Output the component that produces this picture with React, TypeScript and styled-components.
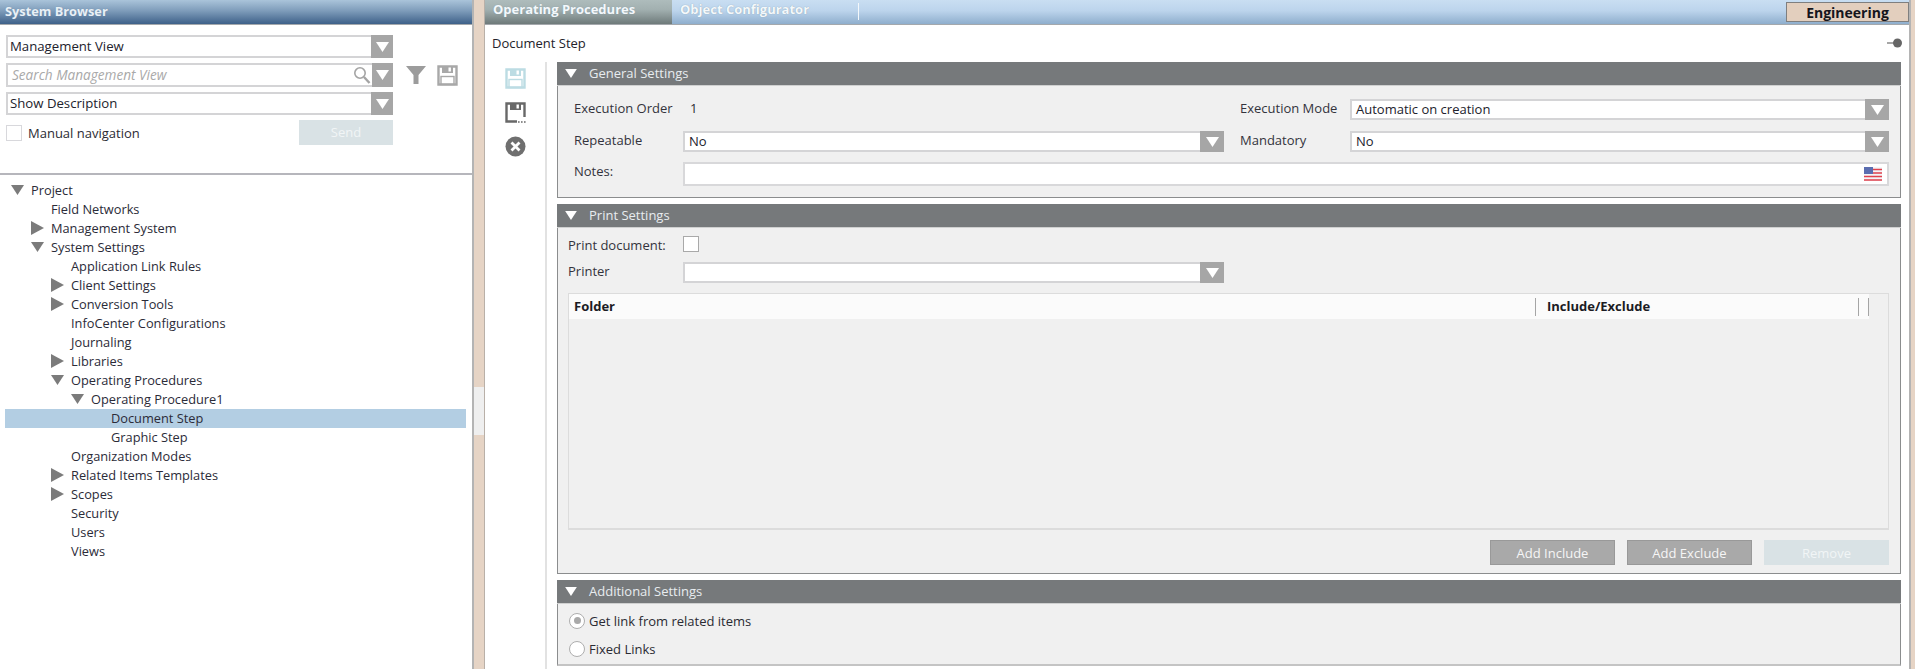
import React from "react";
import styled, { createGlobalStyle } from "styled-components";

const Global = createGlobalStyle`
  html, body { margin: 0; padding: 0; background: #e6d4c5; }
  * { box-sizing: border-box; }
  body { font-family: "Open Sans", "Noto Sans", "Liberation Sans", sans-serif; font-size: 13px; color: #2b2b33; }
`;

const Page = styled.div`
  width: 1915px; height: 669px; display: flex; overflow: hidden; background: #e6d4c5;
`;
const LeftPanel = styled.aside`
  width: 474px; height: 669px; flex: none; background: #fff; border-right: 2px solid #b4b4b4;
  display: flex; flex-direction: column;
`;
const PanelTitle = styled.header`
  height: 25px; flex: none; padding: 2px 0 0 5px; font-weight: 700; font-size: 12.8px; color: #e9f0f6;
  background: linear-gradient(#aac4da, #7e9cba 45%, #3e6189);
  border-bottom: 1px solid #a4a8ac; text-shadow: 0 0 1px #6d8cab;
`;
const Controls = styled.div`
  height: 150px; flex: none; padding: 10px 0 0 6px; display: grid;
  grid-template-columns: 387px auto; grid-template-rows: 23px 24px 23px 24px;
  row-gap: 5px; column-gap: 14px; border-bottom: 2px solid #b6b6bc;
`;
const ToolIcons = styled.div`
  display: flex; gap: 11px; align-items: center; grid-column: 2; grid-row: 2; margin-left: -1px;
`;
const SelectBox = styled.div<{ $h?: number }>`
  height: ${(p) => p.$h ?? 23}px; display: flex; align-items: stretch; background: #fff;
  border: 2px solid #d4d4d6; border-right: none;
  font-size: 13px; color: #22222c; min-width: 0;
`;
const SelectText = styled.div<{ $placeholder?: boolean; $tight?: boolean }>`
  flex: 1; display: flex; align-items: center; padding: 0 0 2px ${(p) => (p.$tight ? 2 : 4)}px; min-width: 0;
  white-space: nowrap;
  ${(p) => p.$tight && "font-size: 13.2px;"}
  ${(p) => p.$placeholder && "font-style: italic; color: #a9a9a9; font-size: 13.6px;"}
`;
const SelectArrow = styled.div<{ $w?: number }>`
  width: ${(p) => p.$w ?? 22}px; flex: none; margin: -2px 0; background: #a6a6a6;
  display: flex; align-items: center; justify-content: center;
`;
const ManualRow = styled.div`
  display: flex; align-items: center; justify-content: space-between; height: 24px;
`;
const CheckLabel = styled.label`
  display: flex; align-items: center; gap: 6px; font-size: 13px; margin-top: 2px;
`;
const CheckBox = styled.span<{ $strong?: boolean }>`
  display: block; width: 16px; height: 16px; background: #fff; flex: none;
  border: 1px solid ${(p) => (p.$strong ? "#a9a9a9" : "#d8d8dc")};
`;
const FlatButton = styled.button<{ $disabled?: boolean; $w: number }>`
  width: ${(p) => p.$w}px; height: 25px; border: 1px solid ${(p) => (p.$disabled ? "#d9e2e5" : "#999")};
  background: ${(p) => (p.$disabled ? "#d9e2e5" : "#a9a9a9")};
  color: ${(p) => (p.$disabled ? "#f1f5f6" : "#f6f6f6")}; font: inherit; font-size: 13px; padding: 0;
`;
const Tree = styled.div`
  padding-top: 5px; flex: 1; position: relative;
`;
const TreeRow = styled.div<{ $depth: number; $selected?: boolean }>`
  height: 19.05px; margin: 0 6px 0 5px; padding-left: ${(p) => p.$depth * 20 + 6}px;
  display: flex; align-items: center; font-size: 12.8px; color: #2b2b38;
  background: ${(p) => (p.$selected ? "#b3cee3" : "transparent")};
`;
const TreeToggle = styled.span`
  width: 20px; flex: none; display: flex; align-items: center;
`;

const Splitter = styled.div`
  width: 11px; flex: none; position: relative; background: #e6d4c5; border-right: 1px solid #b9b0a8;
`;
const Grip = styled.div`
  position: absolute; left: 0; right: 0; top: 387px; height: 48px; background: #efefef;
`;

const MainPanel = styled.main`
  width: 1426px; flex: none; height: 669px; background: #fff; display: flex; flex-direction: column;
  border-right: 2px solid #b4b4b4;
`;
const TabBar = styled.nav`
  height: 25px; flex: none; display: flex; align-items: flex-start;
  background: linear-gradient(#c9def2, #bcd4ec 45%, #8eaecd);
  border-bottom: 1px solid #a4a8ac; font-weight: 700; font-size: 13px;
`;
const Tab = styled.div<{ $active?: boolean; $w: number }>`
  width: ${(p) => p.$w}px; height: 24px; padding: 0 0 0 8px; color: #f4f8fb;
  background: ${(p) => (p.$active ? "linear-gradient(#aebcbc, #a2b0b0 40%, #6e7a7a)" : "transparent")};
  text-shadow: 0 0 1px #7f98a8;
`;
const TabSep = styled.span`
  width: 1px; height: 17px; margin-top: 3px; background: #f4f8fb;
`;
const RoleButton = styled.div`
  margin: 2px 0 0 auto; width: 123px; height: 20px; background: #e3cfbe; border: 1px solid #7f7f7f;
  color: #15151c; font-weight: 700; font-size: 14px; display: flex; align-items: center; justify-content: center;
`;
const TitleRow = styled.div`
  height: 37px; flex: none; padding: 0 6px 2px 7px; display: flex; align-items: center; justify-content: space-between;
  font-size: 13px; color: #23232b;
`;
const Workspace = styled.div`
  flex: 1; display: flex; min-height: 0;
`;
const Toolbar = styled.div`
  width: 62px; flex: none; padding-top: 6px; display: flex; flex-direction: column; align-items: center; gap: 13px;
  border-right: 2px solid #e2e2e2;
`;
const Sections = styled.div`
  flex: 1; padding: 0 8px 0 10px; display: flex; flex-direction: column; gap: 6px;
`;
const Section = styled.section<{ $soft?: boolean }>`
  border: 1px solid #8b8d8e; border-top: none; background: #f0f0f0; flex: none;
  ${(p) => p.$soft && "border-bottom: 2px solid #c4c4c4;"}
`;
const SectionHead = styled.h3`
  margin: 0 -1px; height: 24px; background: #76797b; color: #e8ecef; font-weight: 400; font-size: 13px;
  display: flex; align-items: center; padding: 0 0 1px 8px; gap: 12px; border-bottom: 1px solid #cfd0d0;
`;
const GeneralBody = styled.div`
  height: 111px; padding: 13px 11px 0 16px; display: grid;
  grid-template-columns: 109px 541px 16px 110px 1fr; grid-template-rows: 22px 21px 24px; row-gap: 10px;
`;
const FieldLabel = styled.div`
  font-size: 13px; color: #33333c; height: 18px; line-height: 18px;
`;
const Value = styled.div`
  font-size: 13px; height: 18px; line-height: 18px; padding-left: 7px;
`;
const Gap = styled.div``;
const NotesField = styled.div`
  grid-column: 2 / span 4; display: flex; align-items: center; justify-content: flex-end; padding-right: 5px;
  background: #fff; border: 2px solid #d8d8da;
`;
const PrintBody = styled.div`
  height: 345px; padding: 8px 11px 0 10px; display: flex; flex-direction: column;
`;
const PrintRow = styled.div<{ $h: number; $mb: number }>`
  height: ${(p) => p.$h}px; margin-bottom: ${(p) => p.$mb}px; display: flex; flex: none;
`;
const PrintLabel = styled(FieldLabel)`
  width: 115px; flex: none;
`;
const PrintSelect = styled(SelectBox)`
  width: 541px;
`;
const DataTable = styled.div`
  height: 237px; flex: none; border: 1px solid #dcdcdc; border-bottom-width: 2px;
`;
const TableHead = styled.div`
  height: 25px; width: 1300px; background: #fbfbfb; display: flex; align-items: center;
  font-weight: 700; font-size: 13px; color: #1c1c24;
`;
const HeadCell = styled.div<{ $w: number }>`
  width: ${(p) => p.$w}px; flex: none; height: 18px; line-height: 17px; padding-left: 5px;
  border-right: 1px solid #a5a5a5;
`;
const HeadCellNext = styled(HeadCell)`
  padding-left: 11px;
`;
const ButtonRow = styled.div`
  margin-top: 10px; display: flex; justify-content: flex-end; gap: 12px;
`;
const AdditionalBody = styled.div`
  height: 60px; padding: 6px 0 0 11px; display: flex; flex-direction: column; gap: 7px;
`;
const RadioRow = styled.label`
  height: 21px; display: flex; align-items: center; gap: 4px; font-size: 13px; color: #2b2b33;
`;
const Radio = styled.span<{ $on?: boolean }>`
  width: 16px; height: 16px; border-radius: 50%; border: 1px solid #aeaeae; background: #fff;
  display: flex; align-items: center; justify-content: center; flex: none;
  &::after { content: ""; width: 7px; height: 7px; border-radius: 50%; background: ${(p) => (p.$on ? "#a9a9a9" : "transparent")}; }
`;

const Down = ({ c = "#fff", w = 13, h = 10 }: { c?: string; w?: number; h?: number }) => (
  <svg width={w} height={h} viewBox="0 0 13 10"><path d="M0 0H13L6.5 10Z" fill={c} /></svg>
);
const Right = () => (
  <svg width="13" height="14" viewBox="0 0 13 14"><path d="M0 0L13 7L0 14Z" fill="#7b7b7b" /></svg>
);
const SaveIcon = ({ c, dots }: { c: string; dots?: boolean }) => (
  <svg width="21" height="21" viewBox="0 0 21 21">
    <path d={dots ? "M12 19.5H1.5V1.5H19.5V15" : "M1.5 1.5H19.5V19.5H1.5Z"} fill="none" stroke={c} strokeWidth="2.4" />
    <rect x="5" y="1" width="11" height="7" fill={c} />
    <rect x="11.5" y="2.5" width="2.4" height="4" fill="#fff" />
    {!dots && <rect x="4" y="11.5" width="13" height="8" fill="none" stroke={c} strokeWidth="1.4" />}
    {dots && <path d="M13 20h1.6M16 20h1.6M19 20h1.6" stroke={c} strokeWidth="1.6" />}
  </svg>
);
const Select = ({ text, placeholder, h, w, tight }: { text?: string; placeholder?: boolean; h?: number; w?: number; tight?: boolean }) => (
  <SelectBox $h={h}>
    <SelectText $placeholder={placeholder} $tight={tight}>{text}</SelectText>
    {placeholder && (
      <svg width="18" height="19" viewBox="0 0 18 19" style={{ alignSelf: "center", marginRight: 1 }}>
        <circle cx="7" cy="7" r="5.2" fill="none" stroke="#a4a4a4" strokeWidth="1.6" />
        <path d="M11 11L16.5 17" stroke="#a4a4a4" strokeWidth="2.4" />
      </svg>
    )}
    <SelectArrow $w={w}><Down /></SelectArrow>
  </SelectBox>
);

type Node = { t: string; d: number; a?: "r" | "d"; s?: boolean };
const nodes: Node[] = [
  { t: "Project", d: 0, a: "d" },
  { t: "Field Networks", d: 1 },
  { t: "Management System", d: 1, a: "r" },
  { t: "System Settings", d: 1, a: "d" },
  { t: "Application Link Rules", d: 2 },
  { t: "Client Settings", d: 2, a: "r" },
  { t: "Conversion Tools", d: 2, a: "r" },
  { t: "InfoCenter Configurations", d: 2 },
  { t: "Journaling", d: 2 },
  { t: "Libraries", d: 2, a: "r" },
  { t: "Operating Procedures", d: 2, a: "d" },
  { t: "Operating Procedure1", d: 3, a: "d" },
  { t: "Document Step", d: 4, s: true },
  { t: "Graphic Step", d: 4 },
  { t: "Organization Modes", d: 2 },
  { t: "Related Items Templates", d: 2, a: "r" },
  { t: "Scopes", d: 2, a: "r" },
  { t: "Security", d: 2 },
  { t: "Users", d: 2 },
  { t: "Views", d: 2 },
];

export default function App() {
  return (
    <Page>
      <Global />
      <LeftPanel>
        <PanelTitle>System Browser</PanelTitle>
        <Controls>
          <Select text="Management View" tight />
          <Gap />
          <Select text="Search Management View" placeholder h={24} w={21} />
          <ToolIcons>
            <svg width="20" height="18" viewBox="0 0 20 18"><path d="M0 0H20L12.5 9V18H7.5V9Z" fill="#9c9c9c" /></svg>
            <SaveIcon c="#a8a8a8" />
          </ToolIcons>
          <Select text="Show Description" tight />
          <Gap />
          <ManualRow>
            <CheckLabel><CheckBox />Manual navigation</CheckLabel>
            <FlatButton $disabled $w={94}>Send</FlatButton>
          </ManualRow>
        </Controls>
        <Tree>
          {nodes.map((n) => (
            <TreeRow key={n.t} $depth={n.d} $selected={n.s}>
              <TreeToggle>{n.a === "d" ? <Down c="#7b7b7b" /> : n.a === "r" ? <Right /> : null}</TreeToggle>
              {n.t}
            </TreeRow>
          ))}
        </Tree>
      </LeftPanel>
      <Splitter><Grip /></Splitter>
      <MainPanel>
        <TabBar>
          <Tab $active $w={187}>Operating Procedures</Tab>
          <Tab $w={186}>Object Configurator</Tab>
          <TabSep />
          <RoleButton>Engineering</RoleButton>
        </TabBar>
        <TitleRow>
          Document Step
          <svg width="16" height="10" viewBox="0 0 16 10"><path d="M0 5H7" stroke="#8a8a8a" strokeWidth="1.5" /><circle cx="10.5" cy="5" r="4.5" fill="#666" /></svg>
        </TitleRow>
        <Workspace>
          <Toolbar>
            <SaveIcon c="#bcdce3" />
            <SaveIcon c="#686868" dots />
            <svg width="21" height="21" viewBox="0 0 21 21">
              <circle cx="10.5" cy="10.5" r="10" fill="#6f6f6f" />
              <path d="M6.5 6.5L14.5 14.5M14.5 6.5L6.5 14.5" stroke="#fff" strokeWidth="2.8" />
            </svg>
          </Toolbar>
          <Sections>
            <Section>
              <SectionHead><Down w={12} h={9} />General Settings</SectionHead>
              <GeneralBody>
                <FieldLabel>Execution Order</FieldLabel>
                <Value>1</Value>
                <Gap />
                <FieldLabel>Execution Mode</FieldLabel>
                <Select text="Automatic on creation" h={21} w={24} />
                <FieldLabel>Repeatable</FieldLabel>
                <Select text="No" h={21} w={24} />
                <Gap />
                <FieldLabel>Mandatory</FieldLabel>
                <Select text="No" h={21} w={24} />
                <FieldLabel>Notes:</FieldLabel>
                <NotesField>
                  <svg width="18" height="14" viewBox="0 0 18 14">
                    <rect width="18" height="14" fill="#f3f3f6" />
                    <path d="M0 2.5H18M0 6H18M0 9.5H18M0 13H18" stroke="#e0404c" strokeWidth="1.6" />
                    <rect width="9" height="7" fill="#5a6db0" />
                  </svg>
                </NotesField>
              </GeneralBody>
            </Section>
            <Section>
              <SectionHead><Down w={12} h={9} />Print Settings</SectionHead>
              <PrintBody>
                <PrintRow $h={16} $mb={10}>
                  <PrintLabel>Print document:</PrintLabel>
                  <CheckBox $strong />
                </PrintRow>
                <PrintRow $h={21} $mb={10}>
                  <PrintLabel>Printer</PrintLabel>
                  <PrintSelect $h={21}>
                    <SelectText />
                    <SelectArrow $w={24}><Down /></SelectArrow>
                  </PrintSelect>
                </PrintRow>
                <DataTable>
                  <TableHead>
                    <HeadCell $w={967}>Folder</HeadCell>
                    <HeadCellNext $w={323}>Include/Exclude</HeadCellNext>
                    <HeadCell $w={10} />
                  </TableHead>
                </DataTable>
                <ButtonRow>
                  <FlatButton $w={125}>Add Include</FlatButton>
                  <FlatButton $w={125}>Add Exclude</FlatButton>
                  <FlatButton $w={125} $disabled>Remove</FlatButton>
                </ButtonRow>
              </PrintBody>
            </Section>
            <Section $soft>
              <SectionHead><Down w={12} h={9} />Additional Settings</SectionHead>
              <AdditionalBody>
                <RadioRow><Radio $on />Get link from related items</RadioRow>
                <RadioRow><Radio />Fixed Links</RadioRow>
              </AdditionalBody>
            </Section>
          </Sections>
        </Workspace>
      </MainPanel>
    </Page>
  );
}
